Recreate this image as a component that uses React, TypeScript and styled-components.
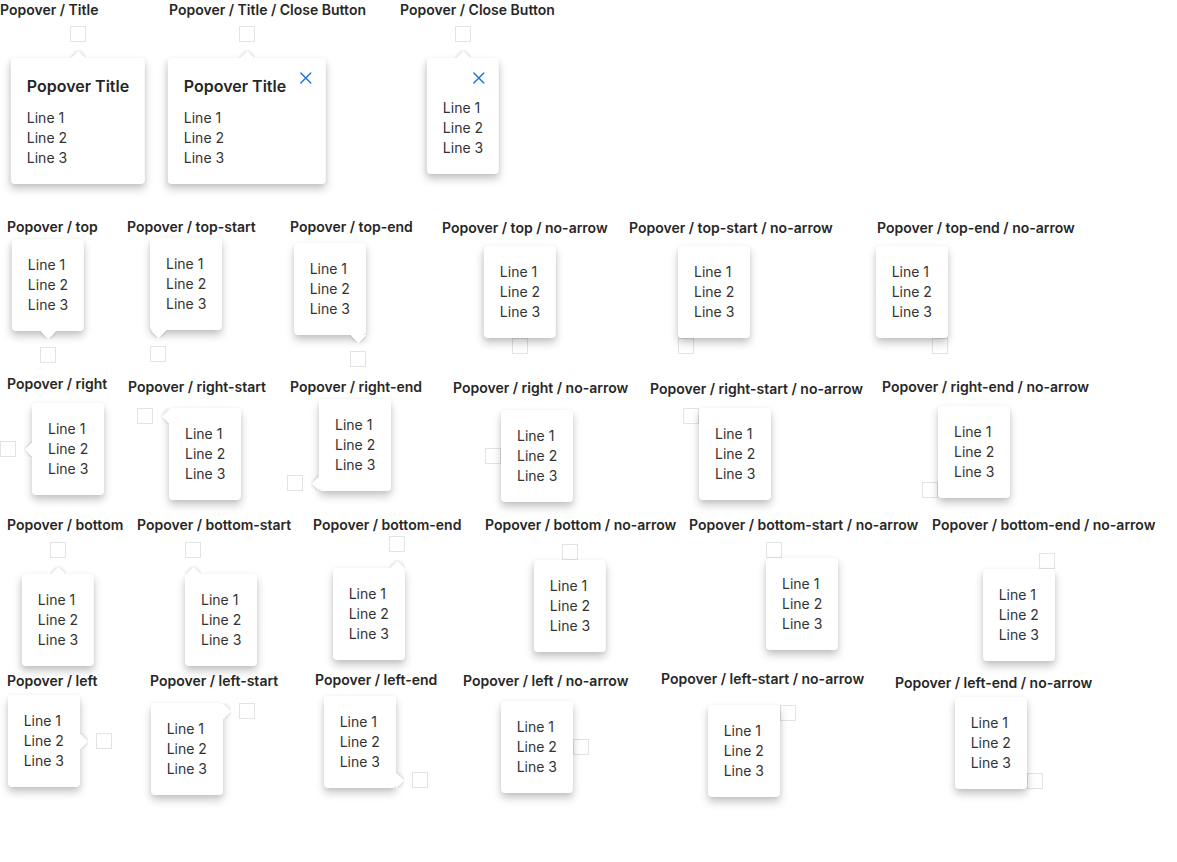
import styled, { createGlobalStyle } from 'styled-components';

type Side = 'top' | 'right' | 'bottom' | 'left';
type Align = 'center' | 'start' | 'end';

interface StoryDef {
  name: string;
  x: number; // title left (page)
  ty: number; // title top (page)
  ax: number; // anchor left (page)
  ay: number; // anchor top (page)
  side: Side;
  align?: Align;
  arrow?: boolean;
  title?: boolean;
  close?: boolean;
}

interface RowDef {
  top: number;
  height: number;
  stories: StoryDef[];
}

const rows: RowDef[] = [
  {
    top: 0,
    height: 205,
    stories: [
      { name: 'Popover / Title', x: 0, ty: 0, ax: 70, ay: 26, side: 'bottom', arrow: true, title: true },
      { name: 'Popover / Title / Close Button', x: 169, ty: 0, ax: 239, ay: 26, side: 'bottom', arrow: true, title: true, close: true },
      { name: 'Popover / Close Button', x: 400, ty: 0, ax: 455, ay: 26, side: 'bottom', arrow: true, close: true },
    ],
  },
  {
    top: 205,
    height: 160,
    stories: [
      { name: 'Popover / top', x: 7, ty: 217, ax: 40, ay: 347, side: 'top', arrow: true },
      { name: 'Popover / top-start', x: 127, ty: 217, ax: 150, ay: 346, side: 'top', align: 'start', arrow: true },
      { name: 'Popover / top-end', x: 290, ty: 217, ax: 350, ay: 351, side: 'top', align: 'end', arrow: true },
      { name: 'Popover / top / no-arrow', x: 442, ty: 218, ax: 512, ay: 338, side: 'top' },
      { name: 'Popover / top-start / no-arrow', x: 629, ty: 218, ax: 678, ay: 338, side: 'top', align: 'start' },
      { name: 'Popover / top-end / no-arrow', x: 877, ty: 218, ax: 932, ay: 338, side: 'top', align: 'end' },
    ],
  },
  {
    top: 365,
    height: 140,
    stories: [
      { name: 'Popover / right', x: 7, ty: 374, ax: 0, ay: 441, side: 'right', arrow: true },
      { name: 'Popover / right-start', x: 128, ty: 377, ax: 137, ay: 408, side: 'right', align: 'start', arrow: true },
      { name: 'Popover / right-end', x: 290, ty: 377, ax: 287, ay: 475, side: 'right', align: 'end', arrow: true },
      { name: 'Popover / right / no-arrow', x: 453, ty: 378, ax: 485, ay: 448, side: 'right' },
      { name: 'Popover / right-start / no-arrow', x: 650, ty: 379, ax: 683, ay: 408, side: 'right', align: 'start' },
      { name: 'Popover / right-end / no-arrow', x: 882, ty: 377, ax: 922, ay: 482, side: 'right', align: 'end' },
    ],
  },
  {
    top: 505,
    height: 155,
    stories: [
      { name: 'Popover / bottom', x: 7, ty: 515, ax: 50, ay: 542, side: 'bottom', arrow: true },
      { name: 'Popover / bottom-start', x: 137, ty: 515, ax: 185, ay: 542, side: 'bottom', align: 'start', arrow: true },
      { name: 'Popover / bottom-end', x: 313, ty: 515, ax: 389, ay: 536, side: 'bottom', align: 'end', arrow: true },
      { name: 'Popover / bottom / no-arrow', x: 485, ty: 515, ax: 562, ay: 544, side: 'bottom' },
      { name: 'Popover / bottom-start / no-arrow', x: 689, ty: 515, ax: 766, ay: 542, side: 'bottom', align: 'start' },
      { name: 'Popover / bottom-end / no-arrow', x: 932, ty: 515, ax: 1039, ay: 553, side: 'bottom', align: 'end' },
    ],
  },
  {
    top: 660,
    height: 202,
    stories: [
      { name: 'Popover / left', x: 7, ty: 671, ax: 96, ay: 733, side: 'left', arrow: true },
      { name: 'Popover / left-start', x: 150, ty: 671, ax: 239, ay: 703, side: 'left', align: 'start', arrow: true },
      { name: 'Popover / left-end', x: 315, ty: 670, ax: 412, ay: 772, side: 'left', align: 'end', arrow: true },
      { name: 'Popover / left / no-arrow', x: 463, ty: 671, ax: 573, ay: 739, side: 'left' },
      { name: 'Popover / left-start / no-arrow', x: 661, ty: 669, ax: 780, ay: 705, side: 'left', align: 'start' },
      { name: 'Popover / left-end / no-arrow', x: 895, ty: 673, ax: 1027, ay: 773, side: 'left', align: 'end' },
    ],
  },
];

const TITLE_LINE = 20;

const isVertical = (side: Side) => side === 'top' || side === 'bottom';

// where the popover sits around its anchor
const placeCss = (side: Side, align: Align, gap: number) => {
  const main = {
    top: `bottom: calc(100% + ${gap}px);`,
    bottom: `top: calc(100% + ${gap}px);`,
    left: `right: calc(100% + ${gap}px);`,
    right: `left: calc(100% + ${gap}px);`,
  }[side];
  let cross = '';
  if (isVertical(side)) {
    cross = align === 'center' ? 'left: 50%; transform: translateX(-50%);' : align === 'start' ? 'left: 0;' : 'right: 0;';
  } else {
    cross = align === 'center' ? 'top: 50%; transform: translateY(-50%);' : align === 'start' ? 'top: 0;' : 'bottom: 0;';
  }
  return main + cross;
};

// clip box just outside the popover edge that faces the anchor
const arrowBoxCss = (side: Side, align: Align) => {
  const edge = { top: 'bottom', bottom: 'top', left: 'right', right: 'left' }[side];
  const vertical = isVertical(side);
  const start = vertical ? 'left' : 'top';
  const end = vertical ? 'right' : 'bottom';
  const size = vertical ? 'width: 16px; height: 8px;' : 'width: 8px; height: 16px;';
  let cross = '';
  if (align === 'center') cross = `${start}: calc(50% - 8px);`;
  else if (align === 'start') cross = `${start}: 0;`;
  else cross = `${end}: 0;`;
  return `${size} ${edge}: -8px; ${cross}`;
};

// the rotated square whose centre sits on the popover edge
const arrowTipCss = (side: Side) => {
  switch (side) {
    case 'bottom':
      return 'left: 2.5px; top: 2.5px;';
    case 'top':
      return 'left: 2.5px; top: -5.5px;';
    case 'right':
      return 'left: 2.5px; top: 2.5px;';
    default:
      return 'left: -5.5px; top: 2.5px;';
  }
};

function CloseIcon() {
  return (
    <svg width="12" height="12" viewBox="0 0 12 12" fill="none">
      <path d="M1 1L11 11M11 1L1 11" stroke="#1a73d9" strokeWidth="1.4" strokeLinecap="round" />
    </svg>
  );
}

interface StoryProps {
  story: StoryDef;
  width?: number;
  rowTop: number;
  first: boolean;
}

function Story({ story, width, rowTop, first }: StoryProps) {
  const align = story.align ?? 'center';
  const dx = story.ax - story.x;
  const dy = story.ay - (story.ty + TITLE_LINE);
  const hasHeader = story.title || story.close;
  return (
    <StoryBox $width={width} $offset={first ? story.x : 0} $top={story.ty - rowTop}>
      <StoryTitle>{story.name}</StoryTitle>
      <Anchor $dx={dx} $dy={dy}>
        <PopoverCard $side={story.side} $align={align} $gap={story.arrow ? 16 : 0}>
          {story.arrow && (
            <ArrowBox $side={story.side} $align={align}>
              <ArrowTip $side={story.side} />
            </ArrowBox>
          )}
          {hasHeader && (
            <Header $withTitle={!!story.title} $withClose={!!story.close}>
              {story.title && <PopTitle>Popover Title</PopTitle>}
            </Header>
          )}
          {story.close && (
            <CloseButton aria-label="Close">
              <CloseIcon />
            </CloseButton>
          )}
          <Line>Line 1</Line>
          <Line>Line 2</Line>
          <Line>Line 3</Line>
        </PopoverCard>
      </Anchor>
    </StoryBox>
  );
}

function App() {
  return (
    <>
      <GlobalStyle />
      <Page>
        {rows.map((row) => (
          <Row key={row.top} $height={row.height}>
            {row.stories.map((s, i) => {
              const next = row.stories[i + 1];
              return (
                <Story
                  key={s.name}
                  story={s}
                  rowTop={row.top}
                  first={i === 0}
                  width={next ? next.x - s.x : undefined}
                />
              );
            })}
          </Row>
        ))}
      </Page>
    </>
  );
}

const GlobalStyle = createGlobalStyle`
  html, body {
    margin: 0;
    padding: 0;
    background: #ffffff;
  }
  body {
    font-family: Inter, "Noto Sans", "Liberation Sans", sans-serif;
    color: #333333;
  }
`;

const Page = styled.div`
  width: 1177px;
  height: 862px;
  overflow: hidden;
`;

const Row = styled.div<{ $height: number }>`
  display: flex;
  align-items: flex-start;
  height: ${(p) => p.$height}px;
`;

const StoryBox = styled.div<{ $width?: number; $offset: number; $top: number }>`
  flex: ${(p) => (p.$width ? 'none' : '1')};
  width: ${(p) => (p.$width ? `${p.$width}px` : 'auto')};
  margin-left: ${(p) => p.$offset}px;
  padding-top: ${(p) => p.$top}px;
`;

const StoryTitle = styled.div`
  font-size: 14px;
  font-weight: 600;
  line-height: 20px;
  color: #272727;
  white-space: nowrap;
`;

const Anchor = styled.div<{ $dx: number; $dy: number }>`
  position: relative;
  width: 16px;
  height: 16px;
  margin-left: ${(p) => p.$dx}px;
  margin-top: ${(p) => p.$dy}px;
  background: #ffffff;
  box-shadow: inset 0 0 0 1px #e3e3e3;
`;

const PopoverCard = styled.div<{ $side: Side; $align: Align; $gap: number }>`
  position: absolute;
  ${(p) => placeCss(p.$side, p.$align, p.$gap)}
  z-index: 2;
  width: max-content;
  box-sizing: border-box;
  padding: 16px;
  background: #ffffff;
  border-radius: 4px;
  box-shadow: 0 5px 9px rgba(0, 0, 0, 0.22), 0 1px 4px rgba(0, 0, 0, 0.06);
  font-size: 14px;
  line-height: 20px;
  color: #333333;
`;

const ArrowBox = styled.span<{ $side: Side; $align: Align }>`
  position: absolute;
  ${(p) => arrowBoxCss(p.$side, p.$align)}
  overflow: hidden;
`;

const ArrowTip = styled.span<{ $side: Side }>`
  position: absolute;
  ${(p) => arrowTipCss(p.$side)}
  width: 11px;
  height: 11px;
  background: #ffffff;
  transform: rotate(45deg);
  box-shadow: 0 0 4px rgba(0, 0, 0, 0.24);
`;

const Header = styled.div<{ $withTitle: boolean; $withClose: boolean }>`
  display: flex;
  align-items: center;
  height: 24px;
  margin-bottom: ${(p) => (p.$withTitle ? 10 : 0)}px;
  padding-right: ${(p) => (p.$withClose && p.$withTitle ? 24 : 0)}px;
`;

const PopTitle = styled.div`
  font-size: 16px;
  font-weight: 600;
  line-height: 24px;
  color: #262626;
`;

const CloseButton = styled.button`
  position: absolute;
  top: 8px;
  right: 8px;
  width: 24px;
  height: 24px;
  padding: 0;
  border: none;
  background: transparent;
  display: flex;
  align-items: center;
  justify-content: center;
  cursor: pointer;
`;

const Line = styled.div`
  white-space: nowrap;
`;

export default App;
